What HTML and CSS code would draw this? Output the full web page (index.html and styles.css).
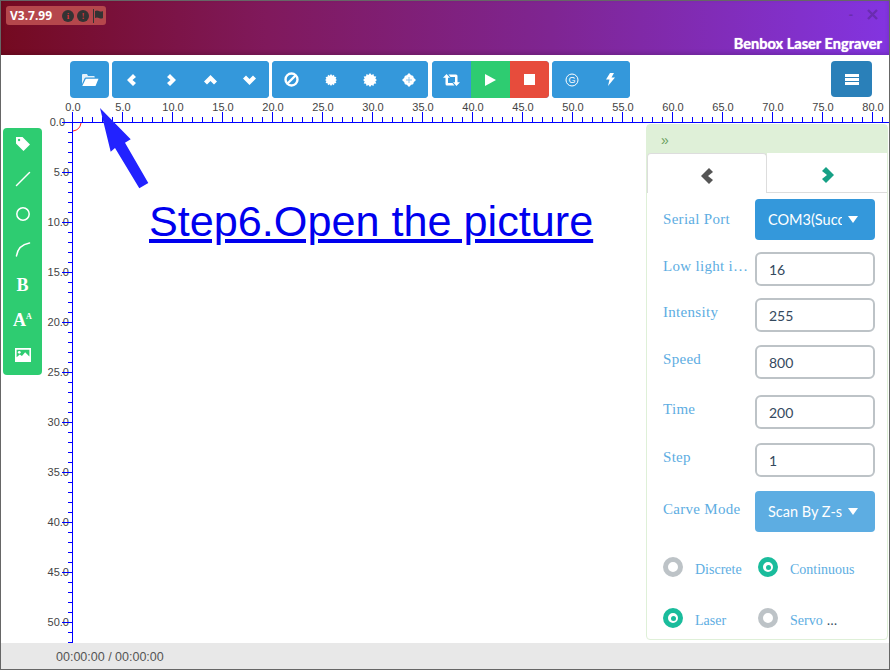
FILE: index.html
```html
<!DOCTYPE html>
<html lang="en">
<head>
    <meta charset="UTF-8">
    <title>Benbox Laser Engraver</title>
    <link rel="stylesheet" href="styles.css">
</head>
<body>
    <div class="app">
        <div class="titlebar">
            <div class="version">
                <span class="version-text">V3.7.99</span>
                <span class="dot">i</span>
                <span class="dot">!</span>
                <svg class="flag" width="12" height="14" viewBox="0 0 12 14"><path d="M1 0h1v14H1zM3 2q2-1 4 0t4 0v7q-2 1-4 0t-4 0z" fill="#333"/></svg>
            </div>
            <div class="window-btns">
                <span class="win-min">-</span>
                <svg width="11" height="11" viewBox="0 0 11 11"><path d="M1 1l9 9M10 1l-9 9" stroke="#6a2cb0" stroke-width="2.4"/></svg>
            </div>
            <div class="app-name">Benbox Laser Engraver</div>
        </div>

        <div class="toolbar">
            <div class="btn-group single">
                <button class="tool"><svg width="18" height="14" viewBox="0 0 18 14"><path d="M1 11V2q0-1 1-1h4l1 2h6q.7 0 .7 1v.6H5q-1 0-1.500 1z" fill="#e4f1fa"/><path d="M4.800 5.800H17.500L14.500 13H1.300z" fill="#fff"/></svg></button>
            </div>
            <div class="btn-group wide">
                <button class="tool"><svg width="10" height="12" viewBox="0 0 10 12"><path d="M6 0l3 3-3.500 3L9 9l-3 3-6-6z" fill="#fff"/></svg></button>
                <button class="tool"><svg width="10" height="12" viewBox="0 0 10 12"><path d="M4 0l-3 3 3.500 3L1 9l3 3 6-6z" fill="#fff"/></svg></button>
                <button class="tool"><svg width="13" height="10" viewBox="0 0 13 10"><path d="M0 6.500l3 3 3.500-3.500L10 9.500l3-3L6.500 0z" fill="#fff"/></svg></button>
                <button class="tool"><svg width="13" height="10" viewBox="0 0 13 10"><path d="M0 3.500l3-3L6.500 4 10 .5l3 3L6.500 10z" fill="#fff"/></svg></button>
            </div>
            <div class="btn-group wide trim">
                <button class="tool"><svg width="15" height="15" viewBox="0 0 15 15"><circle cx="7.500" cy="7.500" r="6" fill="none" stroke="#fff" stroke-width="2.400"/><path d="M3.500 11.500l8-8" stroke="#fff" stroke-width="2.400"/></svg></button>
                <button class="tool"><svg width="12" height="12" viewBox="0 0 12 12"><path d="M6 0l1.300 1.700L9 .8l.4 2 2 .3-.8 1.800L12 6l-1.400 1.100.8 1.800-2 .3-.4 2-1.700-.9L6 12l-1.300-1.700-1.700.9-.4-2-2-.3.8-1.800L0 6l1.400-1.100-.8-1.800 2-.3.4-2 1.700.9z" fill="#fff"/></svg></button>
                <button class="tool"><svg width="14" height="14" viewBox="0 0 12 12"><path d="M6 0l1.300 1.700L9 .8l.4 2 2 .3-.8 1.800L12 6l-1.400 1.100.8 1.800-2 .3-.4 2-1.700-.9L6 12l-1.300-1.700-1.700.9-.4-2-2-.3.8-1.800L0 6l1.400-1.100-.8-1.800 2-.3.4-2 1.700.9z" fill="#fff"/></svg></button>
                <button class="tool"><svg width="14" height="14" viewBox="0 0 14 14"><path d="M7 0l2.200 2.300Q11.700 2.300 11.700 4.800L14 7l-2.300 2.200Q11.700 11.700 9.200 11.700L7 14l-2.200-2.300Q2.300 11.700 2.300 9.200L0 7l2.300-2.200Q2.300 2.300 4.800 2.300z" fill="#fff"/><path d="M6.500 4h1v2.500H10v1H7.500V10h-1V7.500H4v-1h2.500z" fill="#8cc4ea"/></svg></button>
            </div>
            <div class="btn-group mid">
                <button class="tool"><svg width="17" height="12" viewBox="0 0 17 12"><path d="M3.500 0L7 3.800H5V9h4.500l2 2.500H4q-1.500 0-1.500-1.500V3.800H0z" fill="#fff"/><path d="M13.500 12L10 8.200h2V3H7.500l-2-2.500H13q1.500 0 1.500 1.500v6.200H17z" fill="#fff"/></svg></button>
                <button class="tool tool-green"><svg width="11" height="12" viewBox="0 0 11 12"><path d="M0 0l11 6-11 6z" fill="#fff"/></svg></button>
                <button class="tool tool-red"><svg width="11" height="11" viewBox="0 0 11 11"><rect width="11" height="11" fill="#fff"/></svg></button>
            </div>
            <div class="btn-group narrow">
                <button class="tool"><svg width="14" height="14" viewBox="0 0 14 14"><circle cx="7" cy="7" r="6" fill="none" stroke="#fff"/><text class="g-mark" x="7" y="10.200" text-anchor="middle">G</text></svg></button>
                <button class="tool"><svg width="9" height="13" viewBox="0 0 9 13"><path d="M4 0h4L5.500 4.500H9L2 13l1.500-6.500H0z" fill="#fff"/></svg></button>
            </div>
            <button class="menu-btn"><svg width="14" height="11" viewBox="0 0 14 11"><path d="M0 0h14v3H0zM0 4h14v3H0zM0 8h14v3H0z" fill="#fff"/></svg></button>
        </div>

        <div class="stage">
            <svg class="ruler" width="888" height="588" viewBox="1 55 888 588">
                <defs>
                    <pattern id="minorH" x="72" y="117" width="10" height="5" patternUnits="userSpaceOnUse"><rect width="1" height="5" fill="#00f"/></pattern>
                    <pattern id="majorH" x="72" y="112" width="50" height="10" patternUnits="userSpaceOnUse"><rect width="1" height="10" fill="#00f"/></pattern>
                    <pattern id="minorV" x="68" y="122" width="4" height="10" patternUnits="userSpaceOnUse"><rect width="4" height="1" fill="#00f"/></pattern>
                    <pattern id="majorV" x="62" y="122" width="10" height="50" patternUnits="userSpaceOnUse"><rect width="10" height="1" fill="#00f"/></pattern>
                </defs>
                <g class="ruler-labels" text-anchor="middle">
                    <text x="73" y="111">0.0</text><text x="123" y="111">5.0</text><text x="173" y="111">10.0</text><text x="223" y="111">15.0</text><text x="273" y="111">20.0</text><text x="323" y="111">25.0</text><text x="373" y="111">30.0</text><text x="423" y="111">35.0</text><text x="473" y="111">40.0</text><text x="523" y="111">45.0</text><text x="573" y="111">50.0</text><text x="623" y="111">55.0</text><text x="673" y="111">60.0</text><text x="723" y="111">65.0</text><text x="773" y="111">70.0</text><text x="823" y="111">75.0</text><text x="873" y="111">80.0</text>
                </g>
                <g class="ruler-labels" text-anchor="end">
                    <text x="65" y="126">0.0</text><text x="69" y="176">5.0</text><text x="69" y="226">10.0</text><text x="69" y="276">15.0</text><text x="69" y="326">20.0</text><text x="69" y="376">25.0</text><text x="69" y="426">30.0</text><text x="69" y="476">35.0</text><text x="69" y="526">40.0</text><text x="69" y="576">45.0</text><text x="69" y="626">50.0</text>
                </g>
                <rect x="72" y="117" width="817" height="5" fill="url(#minorH)"/>
                <rect x="72" y="112" width="817" height="10" fill="url(#majorH)"/>
                <rect x="68" y="122" width="4" height="521" fill="url(#minorV)"/>
                <rect x="62" y="122" width="10" height="521" fill="url(#majorV)"/>
                <rect x="63" y="122" width="826" height="1" fill="#00f"/>
                <rect x="72" y="112" width="1" height="531" fill="#00f"/>
                <path d="M81 123Q80 130 73 131" fill="none" stroke="#f22" stroke-width="1"/>
                <path d="M100 108L130.700 139.300 125 142.700 148.300 183 139.300 188.300 115 148 110.700 151.700z" fill="#2222ff"/>
            </svg>

            <a class="step-title" href="#">Step6.Open the picture</a>

            <div class="sidebar">
                <svg width="16" height="16" viewBox="0 0 16 16"><path d="M1 1h6.500L15 8.500 8.500 15 1 7.500zM4 2.800a1.200 1.200 0 1 0 .1 0z" fill="#fff" fill-rule="evenodd"/></svg>
                <svg width="16" height="16" viewBox="0 0 16 16"><path d="M1.500 14.500L14.500 1.500" stroke="#fff" stroke-width="1.500" stroke-linecap="round"/></svg>
                <svg width="16" height="16" viewBox="0 0 16 16"><circle cx="8" cy="8" r="6.200" fill="none" stroke="#fff" stroke-width="1.500"/></svg>
                <svg width="16" height="16" viewBox="0 0 16 16"><path d="M1.500 15Q3 4 14.500 2" fill="none" stroke="#fff" stroke-width="1.500" stroke-linecap="round"/></svg>
                <span class="side-text">B</span>
                <span class="side-text">A<sup>A</sup></span>
                <svg width="16" height="16" viewBox="0 -1 15 15"><path d="M0 0h15v13H0zM1.500 1.500v7l3-2.500 2 1.500 3-3.500 4 4V1.500z" fill="#fff" fill-rule="evenodd"/><circle cx="4" cy="4" r="1.300" fill="#fff"/></svg>
            </div>

            <div class="panel">
                <div class="panel-heading">»</div>
                <div class="tabs">
                    <div class="tab active"><svg width="13" height="16" viewBox="0 0 13 16"><path d="M8 0l4 4-5 4 5 4-4 4-8-8z" fill="#555"/></svg></div>
                    <div class="tab"><svg width="13" height="16" viewBox="0 0 13 16"><path d="M5 0L1 4l5 4-5 4 4 4 8-8z" fill="#16a085"/></svg></div>
                </div>
                <div class="form">
                    <div class="row">
                        <label class="field-label flush">Serial Port</label>
                        <button class="select"><span class="select-text">COM3(Success)</span><i class="caret"></i></button>
                    </div>
                    <div class="row">
                        <label class="field-label">Low light intensity</label>
                        <input class="field" type="text" value="16">
                    </div>
                    <div class="row">
                        <label class="field-label">Intensity</label>
                        <input class="field" type="text" value="255">
                    </div>
                    <div class="row">
                        <label class="field-label">Speed</label>
                        <input class="field" type="text" value="800">
                    </div>
                    <div class="row">
                        <label class="field-label">Time</label>
                        <input class="field" type="text" value="200">
                    </div>
                    <div class="row">
                        <label class="field-label">Step</label>
                        <input class="field" type="text" value="1">
                    </div>
                    <div class="row">
                        <label class="field-label">Carve Mode</label>
                        <button class="select light"><span class="select-text">Scan By Z-shape</span><i class="caret"></i></button>
                    </div>
                </div>
                <div class="radios">
                    <div class="radio"><i class="mark"></i>Discrete</div>
                    <div class="radio"><i class="mark on"></i>Continuous</div>
                    <div class="radio"><i class="mark on"></i>Laser</div>
                    <div class="radio"><i class="mark"></i>Servo <b class="more">...</b></div>
                </div>
            </div>
        </div>

        <div class="statusbar">00:00:00 / 00:00:00</div>
    </div>
</body>
</html>
```

FILE: styles.css
```css
* {
    box-sizing: border-box;
}
body {
    margin: 0;
    background-color: #fff;
    font-family: "Liberation Sans", Arial, sans-serif;
}
.app {
    width: 890px;
    height: 670px;
    border: 1px solid #666;
    display: flex;
    flex-direction: column;
    overflow: hidden;
}

/* title bar */
.titlebar {
    position: relative;
    height: 54px;
    flex: none;
    background: linear-gradient(to right, #740a20 0%, #80195c 30%, #7f2592 62%, #8334e0 100%);
    box-shadow: inset 0 -2px 4px rgba(0,0,0,0.15);
}
.version {
    position: absolute;
    left: 5px;
    top: 5px;
    width: 100px;
    height: 19px;
    border-radius: 3px;
    background-color: #b5474c;
    display: flex;
    align-items: center;
    padding-left: 4px;
}
.version-text {
    font-family: "Open Sans", sans-serif;
    font-weight: 700;
    font-size: 12px;
    color: #fff;
    width: 52px;
}
.dot {
    width: 12px;
    height: 12px;
    border-radius: 50%;
    background-color: #333;
    color: #d8343c;
    font: bold 9px/12px "Liberation Serif", serif;
    text-align: center;
    margin-right: 3px;
}
.window-btns {
    position: absolute;
    right: 11px;
    top: 6px;
    display: flex;
    align-items: center;
    gap: 14px;
}
.win-min {
    color: #6a2cb0;
    font-size: 13px;
    font-weight: bold;
}
.app-name {
    position: absolute;
    right: 7px;
    top: 34px;
    font-family: Lato, sans-serif;
    font-weight: 700;
    font-size: 14.6px;
    color: #fff;
    text-shadow: 0 0 1px #fff;
}

/* toolbar */
.toolbar {
    height: 43px;
    flex: none;
    padding: 6px 17px 0 69px;
    display: flex;
    align-items: flex-start;
    gap: 3px;
}
.btn-group {
    display: flex;
    height: 37px;
    border-radius: 4px;
    overflow: hidden;
    background-color: #3498db;
}
.single {
    width: 39px;
}
.wide {
    width: 157px;
}
.trim {
    width: 156px;
    margin-right: 1px;
}
.mid {
    width: 117px;
}
.narrow {
    width: 78px;
}
.tool {
    flex: 1;
    border: 0;
    padding: 0;
    background-color: #3498db;
    display: flex;
    align-items: center;
    justify-content: center;
}
.tool-green {
    background-color: #2ecc71;
}
.tool-red {
    background-color: #e74c3c;
}
.g-mark {
    font: 9px "Liberation Sans", sans-serif;
    fill: #fff;
}
.menu-btn {
    width: 41px;
    height: 36px;
    margin-left: auto;
    border: 0;
    border-radius: 4px;
    padding: 0;
    background-color: #2a80b9;
    display: flex;
    align-items: center;
    justify-content: center;
}

/* canvas */
.stage {
    position: relative;
    flex: 1;
}
.ruler {
    position: absolute;
    left: 0;
    top: -43px;
    display: block;
}
.ruler-labels {
    font: 11px "Liberation Sans", sans-serif;
    fill: #444;
}
.step-title {
    position: absolute;
    left: 148px;
    top: 98px;
    font-size: 43.2px;
    line-height: 50px;
    color: #0000ee;
    white-space: nowrap;
}
.sidebar {
    position: absolute;
    left: 2px;
    top: 30px;
    width: 39px;
    height: 247px;
    padding: 8px 0 12px;
    border-radius: 4px;
    background-color: #2ecc71;
    display: flex;
    flex-direction: column;
    align-items: center;
    justify-content: space-between;
}
.side-text {
    height: 16px;
    font: bold 18px/16px "Liberation Serif", serif;
    color: #fff;
}
.side-text sup {
    font-size: 8px;
    line-height: 0;
}

/* right panel */
.panel {
    position: absolute;
    left: 645px;
    top: 26px;
    width: 242px;
    height: 516px;
    border: 1px solid #dff0d8;
    border-radius: 4px;
    background-color: #fff;
}
.panel-heading {
    height: 28px;
    padding: 3px 0 0 14px;
    background-color: #dff0d8;
    color: #6a9f5f;
    font-size: 14px;
    line-height: 24px;
}
.tabs {
    display: flex;
    height: 40px;
    background-color: #dff0d8;
}
.tab {
    flex: 1;
    padding-top: 4px;
    background-color: #fff;
    border-bottom: 1px solid #ddd;
    display: flex;
    align-items: center;
    justify-content: center;
}
.tab.active {
    flex: none;
    width: 120px;
    border: 1px solid #ddd;
    border-bottom: 0;
    border-radius: 4px 4px 0 0;
}
.form {
    padding: 6px 12px 0 16px;
}
.row {
    display: flex;
    align-items: center;
    justify-content: space-between;
    margin-bottom: 12px;
}
.row:nth-child(3) {
    margin-bottom: 13px;
}
.row:nth-child(4) {
    margin-bottom: 16px;
}
.row:nth-child(5),
.row:nth-child(6) {
    margin-bottom: 14px;
}
.field-label {
    width: 86px;
    padding-bottom: 5px;
    font: 15px/17px "Liberation Serif", serif;
    letter-spacing: 0.3px;
    color: #5dade2;
    white-space: nowrap;
    overflow: hidden;
    text-overflow: ellipsis;
}
.field-label.flush {
    padding-bottom: 0;
}
.field {
    width: 120px;
    height: 34px;
    border: 2px solid #bdc3c7;
    border-radius: 6px;
    padding: 0 12px;
    font: 14px Lato, sans-serif;
    color: #34495e;
    background-color: #fff;
}
.select {
    width: 120px;
    height: 41px;
    border: 0;
    border-radius: 4px;
    padding: 0 17px 0 13px;
    background-color: #3498db;
    color: #fff;
    font: 14.5px Lato, sans-serif;
    display: flex;
    align-items: center;
    justify-content: space-between;
}
.select.light {
    background-color: #5dade2;
}
.select-text {
    width: 74px;
    overflow: hidden;
    white-space: nowrap;
    text-align: left;
}
.caret {
    width: 0;
    height: 0;
    border-left: 5.5px solid transparent;
    border-right: 5.5px solid transparent;
    border-top: 7px solid #fff;
}
.radios {
    display: grid;
    grid-template-columns: 95px 1fr;
    grid-auto-rows: 51px;
    padding: 16px 0 0 16px;
}
.radio {
    display: flex;
    align-items: center;
    height: 20px;
    font: 14px "Liberation Serif", serif;
    color: #5dade2;
}
.mark {
    position: relative;
    width: 20px;
    height: 20px;
    margin: 0 12px 6px 0;
    border-radius: 50%;
    border: 5px solid #bdc3c7;
    background-color: #fff;
}
.mark.on {
    border-color: #1abc9c;
}
.mark.on::after {
    content: "";
    position: absolute;
    left: 2.5px;
    top: 2.5px;
    width: 5px;
    height: 5px;
    border-radius: 50%;
    background-color: #1abc9c;
}
.more {
    font-weight: normal;
    color: #34495e;
    margin-left: 4px;
}

/* status bar */
.statusbar {
    height: 26px;
    flex: none;
    padding-left: 55px;
    background-color: #e8e8e8;
    color: #555;
    font-size: 12.5px;
    line-height: 28px;
}
```
